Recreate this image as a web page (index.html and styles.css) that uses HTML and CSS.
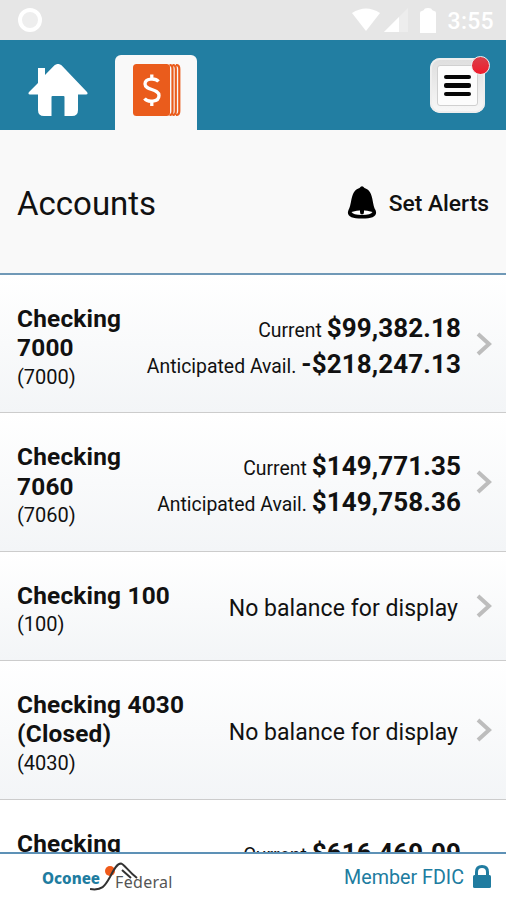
FILE: index.html
```html
<!DOCTYPE html>
<html lang="en">
<head>
    <meta charset="UTF-8">
    <meta name="viewport" content="width=device-width, initial-scale=1">
    <title>Accounts - Oconee Federal</title>
    <link rel="stylesheet" href="styles.css">
</head>
<body>
    <div class="screen">
        <!-- Status bar -->
        <div class="status-bar">
            <span class="status-ring"></span>
            <div class="status-icons">
                <svg class="wifi" width="28" height="24" viewBox="0 0 28 24"><path d="M0 5 Q14 -4 28 5 L14 23 Z" fill="#fff"/></svg>
                <svg class="signal" width="24" height="24" viewBox="0 0 24 24"><path d="M0 24 L24 0 V24 Z" fill="#ededed"/><path d="M0 24 L15 9 V24 Z" fill="#fff"/></svg>
                <svg class="battery" width="16" height="25" viewBox="0 0 16 25"><path d="M4 2 Q4 0 8 0 Q12 0 12 2 L14 3 Q16 3 16 5 V25 H0 V5 Q0 3 2 3 Z" fill="#fff"/></svg>
                <span class="clock">3:55</span>
            </div>
        </div>

        <!-- Navigation -->
        <div class="nav">
            <a class="home">
                <svg width="60" height="52" viewBox="0 0 60 52"><path d="M26.500 1.200 Q30 -1.300 33.500 1.200 L59 28 Q60.500 30.500 58 30.500 H50 V46 Q50 52 44 52 H36.500 V33 Q36.500 32 35.500 32 H24.500 Q23.500 32 23.500 33 V52 H16 Q10 52 10 46 V30.500 H2 Q-0.500 30.500 1 28 L10 19 V4 H17 V11 Z" fill="#fff"/></svg>
            </a>
            <a class="tab">
                <svg width="48" height="52" viewBox="0 0 48 52">
                    <rect x="0" y="0" width="37" height="52" rx="3.500" fill="#ea5c1c"/>
                    <path d="M36.500 1 Q39.500 1 39.500 5 V47 Q39.500 51 36.500 51 M39.500 1 Q42.800 1 42.800 5 V47 Q42.800 51 39.500 51 M43 1 Q46.300 1 46.300 5 V47 Q46.300 51 43 51" fill="none" stroke="#ea5c1c" stroke-width="2.200"/>
                    <path d="M25.500 17.500 C22.500 14 12 13.700 12 20 C12 26.500 26 24.500 26 31.500 C26 38.500 14.500 38.500 11.500 34.500 M18.800 10.500 V16 M18.800 36 V42" fill="none" stroke="#fff" stroke-width="3.300"/>
                </svg>
            </a>
            <a class="menu">
                <span class="menu-face">
                    <span class="bar"></span>
                    <span class="bar"></span>
                    <span class="bar"></span>
                </span>
                <span class="dot"></span>
            </a>
        </div>

        <div class="title-bar">
            <h1>Accounts</h1>
            <a class="alerts">
                <svg width="30" height="33" viewBox="0 0 30 33"><path d="M12.500 2 Q15 -1.500 17.500 2 C27 5 24.500 17 28.500 24 Q32 32.500 15 32.500 Q-2 32.500 1.500 24 C5.500 17 3 5 12.500 2 Z" fill="#000"/><path d="M4.500 26 Q15 22.500 25.500 26 Q24 29 15 29 Q6 29 4.500 26 Z" fill="#fff"/><path d="M13 22 H17 V26 Q17 28.500 15 28.500 Q13 28.500 13 26 Z" fill="#000"/></svg>
                <span>Set Alerts</span>
            </a>
        </div>

        <!-- Account list -->
        <div class="accounts">
            <div class="account">
                <div class="info"><div class="name">Checking 7000</div><div class="number">(7000)</div></div>
                <div class="balances">
                    <div><span class="label">Current</span> <b>$99,382.18</b></div>
                    <div><span class="label">Anticipated Avail.</span> <b>-$218,247.13</b></div>
                </div>
                <svg class="arrow" width="16" height="24" viewBox="0 0 16 24"><path d="M2 2 L13 12 L2 22" fill="none" stroke="#bdbdbd" stroke-width="4"/></svg>
            </div>
            <div class="account">
                <div class="info"><div class="name">Checking 7060</div><div class="number">(7060)</div></div>
                <div class="balances">
                    <div><span class="label">Current</span> <b>$149,771.35</b></div>
                    <div><span class="label">Anticipated Avail.</span> <b>$149,758.36</b></div>
                </div>
                <svg class="arrow" width="16" height="24" viewBox="0 0 16 24"><path d="M2 2 L13 12 L2 22" fill="none" stroke="#bdbdbd" stroke-width="4"/></svg>
            </div>
            <div class="account">
                <div class="info wide"><div class="name">Checking 100</div><div class="number">(100)</div></div>
                <div class="empty">No balance for display</div>
                <svg class="arrow" width="16" height="24" viewBox="0 0 16 24"><path d="M2 2 L13 12 L2 22" fill="none" stroke="#bdbdbd" stroke-width="4"/></svg>
            </div>
            <div class="account">
                <div class="info wide"><div class="name">Checking 4030 (Closed)</div><div class="number">(4030)</div></div>
                <div class="empty">No balance for display</div>
                <svg class="arrow" width="16" height="24" viewBox="0 0 16 24"><path d="M2 2 L13 12 L2 22" fill="none" stroke="#bdbdbd" stroke-width="4"/></svg>
            </div>
            <div class="account">
                <div class="info"><div class="name">Checking</div></div>
                <div class="balances last">
                    <div><span class="label">Current</span> <b>$616,469.09</b></div>
                </div>
            </div>
        </div>

        <div class="footer">
            <div class="logo">
                <span class="oconee">Oconee</span>
                <svg width="48" height="29" viewBox="0 0 48 29"><circle cx="20" cy="9" r="5" fill="#f05a1a"/><path d="M0 27 C12 29 15 24 20 15 C24 7 27 1.500 31 1.500 C34 2 38 9 47 16 M32 8 L41 16" fill="none" stroke="#333" stroke-width="2"/></svg>
                <span class="federal">Federal</span>
            </div>
            <div class="fdic">
                <span>Member FDIC</span>
                <svg width="18" height="24" viewBox="0 0 18 24"><path d="M3.500 11 V7 Q3.500 1.500 9 1.500 Q14.500 1.500 14.500 7 V11" fill="none" stroke="#207ca0" stroke-width="3"/><rect x="0" y="10" width="18" height="13" rx="1.500" fill="#207ca0"/></svg>
            </div>
        </div>
    </div>
</body>
</html>
```
FILE: styles.css
```css
body {
    margin: 0;
    font-family: Roboto, sans-serif;
    color: #111;
}

.screen {
    width: 506px;
    height: 900px;
    display: flex;
    flex-direction: column;
    overflow: hidden;
    background: #f9f9f9;
}

svg {
    display: block;
    flex: none;
}

.status-bar {
    height: 40px;
    flex: none;
    box-sizing: border-box;
    padding: 0 12px 0 18px;
    display: flex;
    align-items: center;
    justify-content: space-between;
    background: #e6e6e6;
}

.status-ring {
    width: 16px;
    height: 16px;
    border: 4px solid #fff;
    border-radius: 50%;
    background: #eee;
}

.status-icons {
    display: flex;
    align-items: center;
}

.signal { margin-left: 4px; }
.battery { margin-left: 12px; }

.clock {
    margin: 2px 0 0 12px;
    font-size: 23px;
    font-weight: 500;
    letter-spacing: 0.3px;
    color: #fff;
}

.nav {
    height: 90px;
    flex: none;
    box-sizing: border-box;
    display: flex;
    align-items: flex-start;
    padding: 15px 21px 0 28px;
    background: #227ea2;
}

.home { padding-top: 9px; }

.tab {
    width: 82px;
    height: 75px;
    margin-left: 27px;
    box-sizing: border-box;
    padding: 9px 0 0 18px;
    border-radius: 6px 6px 0 0;
    background: #f9f9f9;
}

.menu {
    position: relative;
    width: 55px;
    height: 55px;
    margin: 3px 0 0 auto;
    box-sizing: border-box;
    padding: 7px;
    border-radius: 10px;
    background: linear-gradient(#dedede, #f8f8f8);
    box-shadow: inset 0 0 0 2px #eee;
}

.menu-face {
    height: 41px;
    box-sizing: border-box;
    display: flex;
    flex-direction: column;
    align-items: center;
    justify-content: center;
    gap: 4px;
    border: 1px solid #d0d0d0;
    border-radius: 3px;
    background: #fcfcfc;
}

.bar {
    width: 27px;
    height: 4.5px;
    border-radius: 2px;
    background: #050505;
}

.dot {
    position: absolute;
    top: -2px;
    right: -5px;
    width: 17px;
    height: 17px;
    border: 1px solid #eee;
    border-radius: 50%;
    background: linear-gradient(#d8404a, #f01c2c);
}

.title-bar {
    height: 145px;
    flex: none;
    box-sizing: border-box;
    padding: 0 17px 0 17px;
    display: flex;
    align-items: center;
    justify-content: space-between;
    border-bottom: 2px solid #7099b7;
}

h1 {
    margin: 3px 0 0;
    font-size: 33px;
    font-weight: 400;
}

.alerts {
    display: flex;
    align-items: center;
    gap: 12px;
    padding-top: 3px;
    font-size: 22.8px;
    font-weight: 500;
}

.alerts svg { margin-top: -2px; }

.accounts {
    flex: 1;
    min-height: 0;
    overflow: hidden;
}

.account {
    display: flex;
    align-items: flex-start;
    padding: 29px 14px 20px 17px;
    border-bottom: 1px solid #ccc;
    background: linear-gradient(#fff, #f3f5f7);
}

.account:last-child {
    height: 100px;
    background: #fff;
}

.info {
    width: 110px;
    flex: none;
}

.info.wide { width: 180px; }

.name {
    font-size: 24.4px;
    line-height: 29.35px;
    font-weight: 700;
    letter-spacing: 0.2px;
}

.number {
    font-size: 20px;
    line-height: 29.8px;
}

.balances {
    flex: 1;
    align-self: center;
    padding-right: 15px;
    margin-bottom: 5px;
    text-align: right;
    white-space: nowrap;
    font-size: 26px;
    line-height: 36px;
    word-spacing: -1.5px;
}

.balances.last {
    align-self: flex-start;
    padding: 6px 31px 0 0;
}

.label {
    font-size: 19.4px;
    line-height: 1;
    word-spacing: 0;
}

.balances b { letter-spacing: 0.1px; }

.empty {
    flex: 1;
    align-self: center;
    padding-right: 18px;
    margin-bottom: 4px;
    text-align: right;
    white-space: nowrap;
    font-size: 23px;
    letter-spacing: 0.05px;
}

.arrow {
    align-self: center;
    margin-bottom: 9px;
}

.footer {
    height: 48px;
    flex: none;
    box-sizing: border-box;
    padding: 0 15px 0 42px;
    display: flex;
    justify-content: space-between;
    border-top: 2px solid #5d91b6;
    background: #fff;
}

.logo {
    display: flex;
    align-items: flex-start;
    font-family: "Noto Sans", sans-serif;
    font-size: 16px;
    line-height: 20px;
}

.oconee {
    padding-top: 14px;
    font-size: 15.2px;
    font-weight: 800;
    color: #207ca0;
}

.logo svg {
    margin: 8px -23px 0 -10px;
}

.federal {
    padding-top: 18px;
    letter-spacing: 0.3px;
    color: #555;
}

.fdic {
    display: flex;
    align-items: center;
    gap: 9px;
    font-size: 19.7px;
    color: #207ca0;
}
```
